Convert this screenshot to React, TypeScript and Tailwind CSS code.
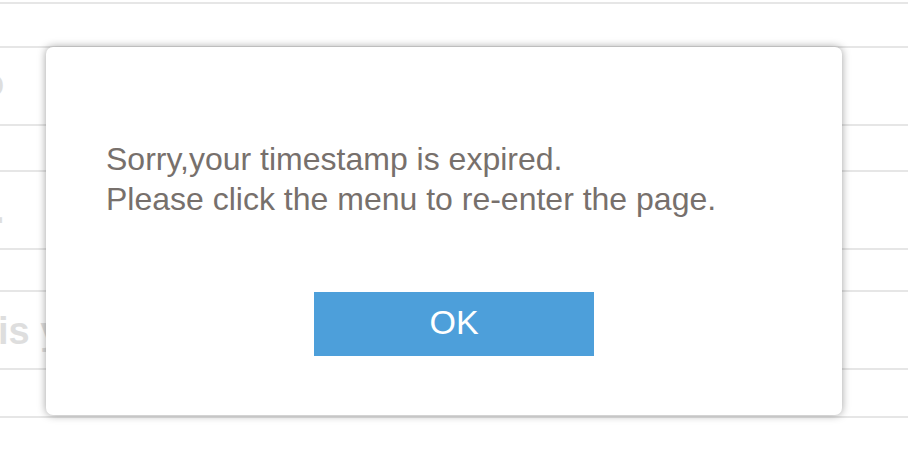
import React from "react";

const rowText = "text-[38px] font-bold text-[#dedede] leading-none whitespace-nowrap";

export default function App() {
  return (
    <div
      className="relative w-[908px] h-[470px] bg-white overflow-hidden"
      style={{ fontFamily: '"Liberation Sans", Arial, Helvetica, sans-serif' }}
    >
      {/* background list */}
      <div className="flex flex-col">
        <div className="h-[4px] border-b-2 border-[#e6e6e6]" />
        <div className="h-[44px] border-b-2 border-[#e6e6e6]" />
        <div className="h-[78px] border-b-2 border-[#e6e6e6] flex items-center">
          <span className={`${rowText} -ml-[19px] -mt-[6px]`}>o</span>
        </div>
        <div className="h-[46px] border-b-2 border-[#e6e6e6]" />
        <div className="h-[78px] border-b-2 border-[#e6e6e6] flex items-center">
          <span className={`${rowText} -ml-[6px]`}>.</span>
        </div>
        <div className="h-[42px] border-b-2 border-[#e6e6e6]" />
        <div className="h-[78px] border-b-2 border-[#e6e6e6] flex items-center">
          <span className={`${rowText} -ml-[2px] mt-[2px]`}>is your</span>
        </div>
        <div className="h-[48px] border-b-2 border-[#e6e6e6]" />
      </div>

      {/* dialog */}
      <div className="absolute left-[46px] top-[47px] w-[796px] h-[368px] bg-white rounded-[7px] shadow-[0_0_9px_rgba(0,0,0,0.38)] flex flex-col">
        <div className="pt-[92px] pl-[60px] text-[32px] leading-[40px] text-[#77706c]">
          <div>Sorry,your timestamp is expired.</div>
          <div>Please click the menu to re-enter the page.</div>
        </div>
        <div className="flex justify-center pt-[73px] pl-[20px]">
          <button className="w-[280px] h-[64px] bg-[#4d9fda] text-white text-[34px] leading-[60px] pb-[4px]">
            OK
          </button>
        </div>
      </div>
    </div>
  );
}
